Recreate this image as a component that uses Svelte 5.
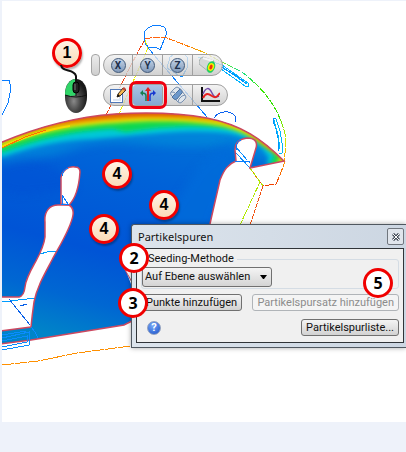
<script>
    const callouts = [
        { n: 1, x: 50, y: 37, tipo: "warm" },
        { n: 4, x: 100, y: 158, tipo: "warm" },
        { n: 4, x: 147, y: 189, tipo: "warm" },
        { n: 4, x: 87, y: 213, tipo: "warm" },
        { n: 2, x: 117, y: 242, tipo: "plain" },
        { n: 3, x: 116, y: 287, tipo: "plain" },
        { n: 5, x: 361, y: 267, tipo: "plain" },
    ];
    const ejes = ["X", "Y", "Z"];
    const metodos = ["Auf Ebene auswählen", "Auf Linie auswählen", "Auf Kreis auswählen"];

    let metodo = metodos[0];
    let activo = "traces";
    let abierto = true;
</script>

<main>
    <div class="stage">
        <svg class="model" width="404" height="421" viewBox="2 1 404 421" aria-hidden="true">
            <defs>
                <clipPath id="section">
                    <path clip-rule="evenodd" d="M0 143C35 128 75 117 115 114C150 112 180 113 207 118C242 125 262 139 284 161L250 168L256 148C258 141 254 138 247 138C239 139 235 143 235 150L236 161C228 164 224 170 220 180C216 198 213 210 210 224V300L131 281L125 268L131 284V321L124 325L31 340L0 344Z
                    M61 178C62 171 68 166 75 167Q80 167 80 172C79 187 75 199 69 205L61 204Z
                    M45 222C44 211 50 205 58 205H69Q74 208 73 215C71 228 60 245 52 260C44 275 37 287 34 302Q32 316 31 327L0 331V297H19Q24 296 25 287C26 278 31 270 36 261Q44 246 45 237Z" />
                </clipPath>
                <linearGradient id="base" x1="150" y1="120" x2="90" y2="345" gradientUnits="userSpaceOnUse">
                    <stop offset="0" stop-color="#0070d8" />
                    <stop offset="0.25" stop-color="#0062d8" />
                    <stop offset="0.6" stop-color="#0054d6" />
                    <stop offset="0.82" stop-color="#0067d2" />
                    <stop offset="1" stop-color="#0084c8" />
                </linearGradient>
                <linearGradient id="rim" x1="145" y1="0" x2="286" y2="0" gradientUnits="userSpaceOnUse">
                    <stop offset="0" stop-color="#ff5a10" />
                    <stop offset="0.3" stop-color="#ff7a00" />
                    <stop offset="0.45" stop-color="#e8c800" />
                    <stop offset="0.58" stop-color="#5ce63c" />
                    <stop offset="0.68" stop-color="#10e090" />
                    <stop offset="0.82" stop-color="#38e800" />
                    <stop offset="1" stop-color="#30e000" />
                </linearGradient>
                <linearGradient id="rim2" x1="0" y1="112" x2="0" y2="187" gradientUnits="userSpaceOnUse">
                    <stop offset="0" stop-color="#38e800" />
                    <stop offset="0.4" stop-color="#d8e800" />
                    <stop offset="0.65" stop-color="#ff9a00" />
                    <stop offset="1" stop-color="#f03800" />
                </linearGradient>
                <filter id="soft" x="-10%" y="-30%" width="120%" height="160%"><feGaussianBlur stdDeviation="2" /></filter>
                <filter id="softer" x="-10%" y="-30%" width="120%" height="160%"><feGaussianBlur stdDeviation="5" /></filter>
            </defs>

            <!-- wireframe behind the cut -->
            <g class="wire">
                <path stroke="#0a7cff" d="M146 45L144 39V33Q146 28 152 26Q158 24 164 27Q167 30 166 35L160 50L156 47H148L144 39M146 45L154 55L207 117" />
                <path stroke="#f04010" stroke-dasharray="5 1" d="M144 41L131 65L106 115" />
                <path stroke="#e8f000" stroke-dasharray="6 1" d="M145 40L148 48L136 75L119 114" />
                <path stroke="url(#rim)" stroke-dasharray="7 1" d="M145 39Q158 36 167 38L203 52L222 62L242 72Q256 83 266 95Q276 108 280 119" />
                <path stroke="url(#rim2)" stroke-dasharray="9 1" d="M280 119Q286 132 286 143L284 164L280 175L276 184L263 186L250 168" />
                <path stroke="#00b4ff" d="M198 57L222 65L248 83V86H245L221 69M222 67L247 84" />
                <path stroke="#0092ff" d="M221 67L238 77L246 84" />
                <path stroke="#0092ff" d="M273 118L276 119M273 118V121L276 129L279 143L278 151" />
                <path stroke="#00b8f8" d="M276 119L280 131L282 143V153L279 154M274 120L278 135L280 149" />
                <path stroke="#0a62f0" d="M214 118Q218 112 224 112Q231 111 235 116V122" />
                <path stroke="#0a7cff" d="M2 80H9L11 88L8 103L2 115" />
                <path stroke="#0a8cff" d="M170 57L175 54H184L188 58L187 68L182 77L178 75L167 68Z" />
                <path stroke="#b0e800" stroke-dasharray="5 1" d="M250 168L263 186M260 182L240 225" />
                <path stroke="#f05010" stroke-dasharray="5 1" d="M263 186L250 225" />
                <path stroke="#ff9000" stroke-dasharray="12 1" d="M2 365L38 361L77 353L131 346" />
                <path stroke="#009cff" d="M2 302L35 298M40 254L47 252L56 251" />
                <path stroke="#0860e8" d="M9 299L30 325M20 306L27 304" />
                <path stroke="#0a8cff" d="M236 147L247 160M236 153L250 168" />
            </g>

            <!-- cut through the result volume -->
            <g clip-path="url(#section)">
                <rect x="0" y="100" width="300" height="250" fill="url(#base)" />
                <path filter="url(#softer)" fill="#0090dc" opacity="0.65" d="M0 120H290V164L255 156L230 145Q180 148 140 144T75 149T0 165Z" />
                <path filter="url(#softer)" fill="#006cda" opacity="0.8" d="M200 165L232 140V170L210 230L150 260L170 210Z" />
                <path filter="url(#softer)" fill="#004cd4" opacity="0.4" d="M0 165Q25 152 52 166T75 190L20 195L0 190Z" />
                <path filter="url(#soft)" fill="#00c8d8" d="M0 158C35 145 65 140 92 139L126 136C170 132 208 129 236 135L249 139L262 148L269 158L266 164L286 165V100H0Z" />
                <path filter="url(#soft)" fill="#08d850" d="M0 153C40 138 75 131 112 129L126 132C160 126 205 124 235 129C252 135 263 145 275 154L270 165L290 166V100H0Z" />
                <path filter="url(#soft)" fill="#e8e800" d="M0 147C35 133 75 125 118 123C155 120 200 121 226 127C250 133 267 148 281 156L276 165H290V100H0Z" />
                <path filter="url(#soft)" fill="#e87800" d="M0 143C35 129 75 121 118 119C150 116 190 118 218 121L242 128L285 161V100H0Z" />
                <path filter="url(#soft)" fill="#d84818" d="M60 120L115 115C150 113 170 114 185 114V100H60Z" />
                <path fill="#f4d800" d="M0 146C25 135 46 129 70 125V127C45 131 25 138 0 149Z" />
            </g>
            <g fill="none" stroke="#cc4860" stroke-width="1.5">
                <path d="M0 143C35 128 75 117 115 114C150 112 180 113 207 118C242 125 262 139 284 161L250 168L256 148C258 141 254 138 247 138C239 139 235 143 235 150L236 161C228 164 224 170 220 180C216 198 213 210 210 224" />
                <path d="M61 178C62 171 68 166 75 167Q80 167 80 172C79 187 75 199 69 205L61 204Z" />
                <path d="M0 297H19Q24 296 25 287C26 278 31 270 36 261Q44 246 45 237V222C44 211 50 205 58 205H69Q74 208 73 215C71 228 60 245 52 260C44 275 37 287 34 302Q32 316 31 327L0 331" />
                <path d="M0 344L31 340L124 325L132 321" />
            </g>
            <path fill="#fff" stroke="#cc4860" d="M124 268L132 282V268Z" />
            <g class="wire">
                <path stroke="#0a7cff" d="M62 204V195L68 204H61M62 176Q63 170 68 168M235 161H249V163M236 150Q236 141 241 140" />
                <path stroke="#0a8cff" d="M2 338L29 332V345L2 350M2 341L27 336V342L2 347M2 335L26 331M31 327Q36 332 38 338" />
                <path stroke="#ff7000" d="M2 148L25 137L46 130" />
            </g>
        </svg>

        <div class="toolbars">
            <div class="bar">
                <button class="grip" aria-label="Leiste verschieben"></button>
                <div class="pill">
                    {#each ejes as eje}
                        <button class="tool" aria-label="Ebene {eje}">
                            <span class="axis">{eje}</span>
                        </button>
                    {/each}
                    <button class="tool last" aria-label="Isofläche">
                        <svg width="18" height="18" viewBox="0 0 18 18">
                            <path d="M4 1Q0 2 0 8L10 16L15 5Z" fill="#d4d8d8" stroke="#a8b0b0" />
                            <path d="M4 2L14 5" stroke="#f4f6f6" stroke-width="2" />
                            <ellipse cx="12" cy="11" rx="4" ry="6" transform="rotate(20 12 11)" fill="#20d060" />
                            <ellipse cx="12" cy="11" rx="3" ry="4" transform="rotate(20 12 11)" fill="#f4f000" />
                            <ellipse cx="12" cy="11" rx="1.5" ry="2.5" transform="rotate(20 12 11)" fill="#f03010" />
                        </svg>
                    </button>
                </div>
            </div>
            <div class="bar second">
                <div class="pill">
                    <button class="tool" aria-label="Bearbeiten">
                        <svg width="18" height="18" viewBox="0 0 18 18">
                            <rect x="1.5" y="3.5" width="12" height="13" fill="#fff" stroke="#5078b8" />
                            <path d="M11 8V14H4" fill="none" stroke="#dce6f4" stroke-width="2" />
                            <path d="M8 11L9 8L14 2L17 4L11 10Z" fill="#f4b850" stroke="#403020" />
                            <path d="M13 3L15 1L17 3L16 5Z" fill="#c04838" />
                            <path d="M8 11L9 8L11 10Z" fill="#111" />
                        </svg>
                    </button>
                    <button class="tool" class:active={activo == "traces"} aria-label="Partikelspuren" on:click={() => (activo = "traces")}>
                        <svg width="18" height="18" viewBox="0 0 18 18">
                            <g fill="none" stroke-width="1.5">
                                <path d="M7 15V10Q7 7 3 7" stroke="#168050" />
                                <path d="M9 15V4" stroke="#e02020" stroke-width="2" />
                                <path d="M11 15V10Q11 7 15 7" stroke="#1838d0" />
                            </g>
                            <path d="M4 4V10L1 7Z" fill="#168050" />
                            <path d="M6 5L9 1L12 5Z" fill="#e02020" />
                            <path d="M14 4V10L17 7Z" fill="#1838d0" />
                        </svg>
                    </button>
                    <button class="tool" aria-label="Isovolumen">
                        <svg width="18" height="18" viewBox="0 0 18 18">
                            <path d="M2 6L6 2Q8 0 10 2L16 9Q18 11 16 13L13 16Q11 18 9 16L2 9Q1 7 2 6Z" fill="#e0e6ec" stroke="#7890b0" />
                            <path d="M3 11L11 3L13 5Q14 7 12 8L8 13Q6 14 5 13Z" fill="#6c98cc" stroke="#4c709c" />
                            <path d="M2 6Q5 5 8 9M10 2Q13 3 14 7M9 16Q9 13 13 10L16 9" fill="none" stroke="#7890b0" />
                        </svg>
                    </button>
                    <button class="tool last wide" aria-label="Diagramm">
                        <svg width="20" height="18" viewBox="0 0 20 18">
                            <path d="M2 1V15H20" fill="none" stroke="#111" stroke-width="2" />
                            <path d="M3 8C6 1 9 1 12 7S16 11 19 10" fill="none" stroke="#7048a8" stroke-width="1.5" />
                            <path d="M3 12C6 6 9 8 12 10S16 12 20 7" fill="none" stroke="#e82020" stroke-width="2" />
                        </svg>
                    </button>
                </div>
            </div>
        </div>

        {#if abierto}
            <section class="dialog" aria-label="Partikelspuren">
                <header>
                    <span>Partikelspuren</span>
                    <button class="close" aria-label="Schließen" on:click={() => (abierto = false)}>
                        <svg width="8" height="8" viewBox="0 0 8 8">
                            <path d="M1 1L7 7M7 1L1 7" stroke="#444c58" stroke-width="3" />
                            <path d="M1 1L7 7M7 1L1 7" stroke="#fff" />
                        </svg>
                    </button>
                </header>
                <div class="content">
                    <fieldset>
                        <legend><label for="metodo">Seeding-Methode</label></legend>
                        <div class="combo">
                            <select id="metodo" bind:value={metodo}>
                                {#each metodos as m}
                                    <option value={m}>{m}</option>
                                {/each}
                            </select>
                            <svg width="7" height="4" viewBox="0 0 7 4"><path d="M0 0H7L4 4H3Z" /></svg>
                        </div>
                    </fieldset>
                    <div class="row">
                        <button class="btn">Punkte hinzufügen</button>
                        <button class="btn" disabled>Partikelspursatz hinzufügen</button>
                    </div>
                    <div class="row">
                        <button class="help" aria-label="Hilfe">?</button>
                        <button class="btn">Partikelspurliste...</button>
                    </div>
                </div>
            </section>
        {/if}

        {#each callouts as c}
            <span class="callout {c.tipo}" style="left: {c.x}px; top: {c.y}px">{c.n}</span>
        {/each}

        <svg class="mouse" width="30" height="50" viewBox="0 0 30 50" aria-hidden="true">
            <defs>
                <radialGradient id="shell" cx="0.4" cy="0.65" r="0.6">
                    <stop offset="0" stop-color="#8a8a8a" />
                    <stop offset="0.5" stop-color="#484848" />
                    <stop offset="1" stop-color="#181818" />
                </radialGradient>
            </defs>
            <path d="M3 15C3 6 8 0 14 0S25 6 25 15V18C25 27 20 34 14 34S3 27 3 18Z" transform="translate(0 14)" fill="url(#shell)" />
            <path d="M3 30C3 20 8 14 14 14V30Q8 32 3 30Z" fill="#30d468" />
            <path d="M3 30Q14 34 25 30M14 15V31" fill="none" stroke="#111" />
            <rect x="11" y="17" width="6" height="11" rx="3" fill="#222" stroke="#000" />
            <path d="M13 19V25" stroke="#777" />
            <path d="M-1 0C0 8 12 3 14 11V17" fill="none" stroke="#111" stroke-width="2" />
        </svg>
    </div>
</main>

<style>
    :global(body) {
        margin: 0;
        background: #eef2fa;
    }

    main {
        padding: 1px 0 30px 2px;
        font-family: Roboto, sans-serif;
        font-size: 11px;
        line-height: 16px;
        color: #111;
    }

    .stage {
        position: relative;
        overflow: hidden;
        background: #fff;
    }

    .model {
        display: block;
    }

    .wire {
        fill: none;
        shape-rendering: crispEdges;
    }

    button,
    select {
        box-sizing: border-box;
        margin: 0;
        padding: 0;
        font: inherit;
        color: inherit;
    }

    /* floating toolbars */
    .toolbars {
        position: absolute;
        left: 89px;
        top: 53px;
        display: flex;
        flex-direction: column;
        gap: 8px;
    }

    .bar {
        display: flex;
        gap: 3px;
    }

    .second {
        margin-left: 12px;
    }

    .grip {
        width: 9px;
        height: 22px;
        border: 1px solid #a4a4a4;
        border-radius: 4px;
        background: linear-gradient(#ececec, #cfcfcf);
    }

    .pill {
        display: flex;
        height: 22px;
        box-sizing: border-box;
        border: 1px solid #a0a0a0;
        border-radius: 11px;
        background: linear-gradient(rgba(240, 240, 240, 0.8), rgba(198, 198, 198, 0.8));
    }

    .tool {
        display: flex;
        align-items: center;
        justify-content: center;
        width: 30px;
        height: 20px;
        border: 0;
        border-right: 1px solid #a0a0a0;
        background: none;
    }

    .tool:first-child {
        width: 29px;
    }

    .tool.last {
        width: 29px;
        border-right: 0;
    }

    .tool.wide {
        width: 34px;
    }

    .tool.active {
        background: linear-gradient(#a8c4e4, #84a8d0);
        outline: 3px solid #f00010;
        outline-offset: 1px;
        border-radius: 3px;
        z-index: 1;
    }

    .axis {
        width: 13px;
        height: 13px;
        border: 1px solid #405878;
        border-radius: 50%;
        background: linear-gradient(#c4d4e8, #8098b8);
        font-size: 10px;
        font-weight: bold;
        line-height: 13px;
        color: #20304c;
    }

    /* dialog */
    .dialog {
        position: absolute;
        left: 129px;
        right: 0;
        top: 223px;
        box-sizing: border-box;
        padding: 0 2px 4px 4px;
        border: 1px solid #505860;
        border-right: 0;
        border-radius: 3px 0 0 0;
        background: linear-gradient(90deg, #dce4ec, #ccd6e2);
        box-shadow: 0 0 5px rgba(0, 0, 0, 0.35);
    }

    header {
        display: flex;
        align-items: center;
        justify-content: space-between;
        height: 23px;
        padding-left: 2px;
        font-family: "Noto Sans", sans-serif;
    }

    .close {
        display: flex;
        align-items: center;
        justify-content: center;
        width: 17px;
        height: 17px;
        border: 1px solid #70767e;
        border-radius: 2px;
        background: #e0e5ec;
    }

    .content {
        display: flex;
        flex-direction: column;
        padding: 2px 4px 6px 4px;
        border: 1px solid #303438;
        background: #f0f0f0;
    }

    fieldset {
        min-width: 0;
        margin: 0 0 5px;
        padding: 0 0 1px;
        border: 1px solid #d4dce4;
        border-radius: 3px;
    }

    legend {
        margin-left: 3px;
        padding: 0 3px;
    }

    .combo {
        display: inline-grid;
        align-items: center;
        vertical-align: top;
    }

    .combo select,
    .combo svg {
        grid-area: 1 / 1;
    }

    .combo svg {
        justify-self: end;
        margin-right: 5px;
        pointer-events: none;
    }

    select {
        appearance: none;
        width: 130px;
        height: 20px;
        padding-left: 2px;
        border: 1px solid #707070;
        border-radius: 3px;
        background: linear-gradient(#f4f4f4, #d4d4d4);
    }

    .row {
        display: flex;
        align-items: center;
        justify-content: space-between;
    }

    .row + .row {
        margin-top: 8px;
    }

    .btn {
        height: 17px;
        padding: 0 4px;
        border: 1px solid #707070;
        border-radius: 3px;
        background: linear-gradient(#f4f4f4, #d2d2d2);
        line-height: 15px;
        white-space: nowrap;
    }

    .btn:disabled {
        border-color: #b0b4b8;
        background: #f4f4f4;
        color: #8c8c8c;
    }

    .help {
        width: 14px;
        height: 14px;
        margin-left: 6px;
        border: 1px solid #90a0c0;
        border-radius: 50%;
        background: radial-gradient(circle at 40% 30%, #78a8f8, #1850c8);
        color: #fff;
        font-weight: bold;
        line-height: 12px;
    }

    /* numbered callouts */
    .callout {
        position: absolute;
        box-sizing: border-box;
        width: 30px;
        height: 30px;
        border: 3px solid #f00000;
        border-radius: 50%;
        font-weight: bold;
        font-size: 16px;
        line-height: 24px;
        text-align: center;
        color: #000;
    }

    .warm {
        background: linear-gradient(#fff4e4, #fbdcb8);
        box-shadow: 1px 2px 2px rgba(0, 0, 0, 0.3);
        font-family: "Liberation Sans", sans-serif;
    }

    .plain {
        background: #fff;
        font-family: "Open Sans", sans-serif;
    }

    .mouse {
        position: absolute;
        left: 60px;
        top: 64px;
        overflow: visible;
    }
</style>
